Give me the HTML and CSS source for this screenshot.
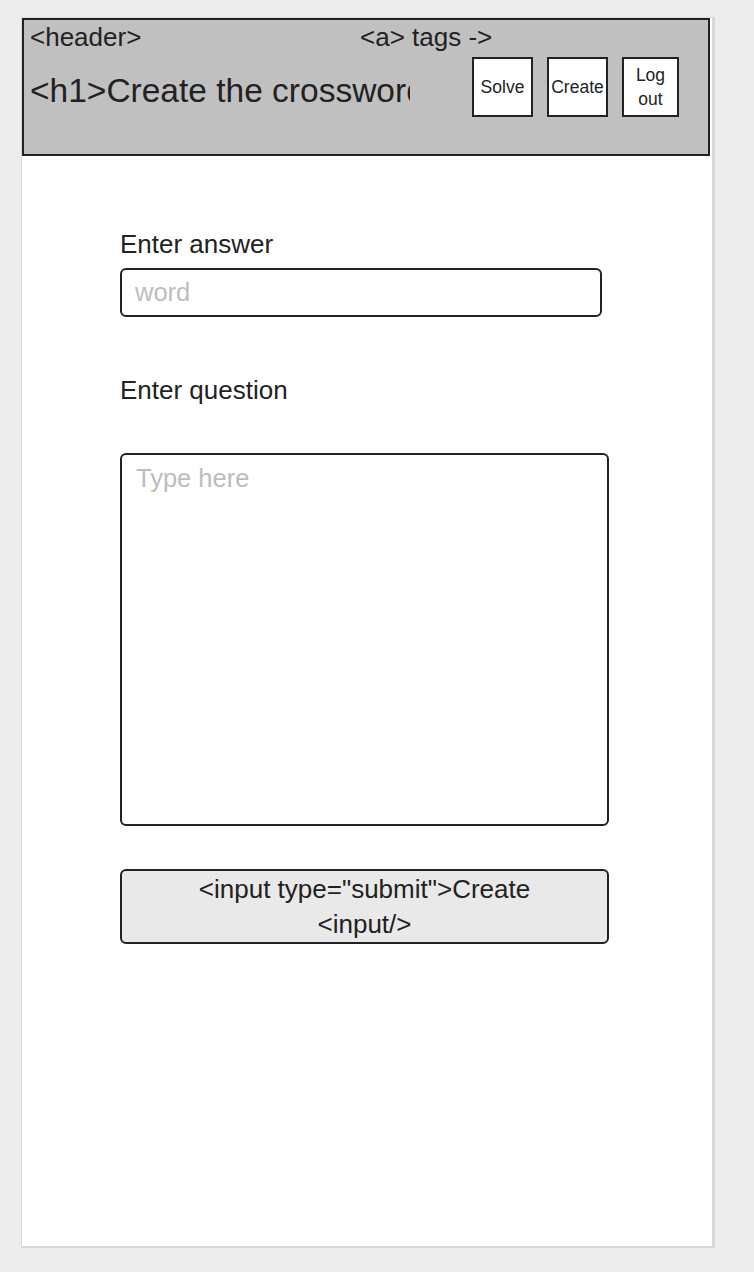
FILE: index.html
```html
<!DOCTYPE html>
<html lang="en">
<head>
  <meta charset="UTF-8">
  <meta name="viewport" content="width=device-width, initial-scale=1.0">
  <title>Create the crossword</title>
  <link rel="stylesheet" href="styles.css">
</head>
<body>
  <div class="frame">
    <header class="header">
      <div class="header-top">
        <span class="tag-label">&lt;header&gt;</span>
        <span class="tag-label">&lt;a&gt; tags -&gt;</span>
      </div>
      <div class="header-main">
        <h1>&lt;h1&gt;Create the crossword&lt;/h1&gt;</h1>
        <nav class="nav">
          <a href="#" class="nav-link">Solve</a>
          <a href="#" class="nav-link">Create</a>
          <a href="#" class="nav-link">Log out</a>
        </nav>
      </div>
    </header>

    <form class="form">
      <label class="label" for="answer">Enter answer</label>
      <input id="answer" class="field" type="text" placeholder="word">

      <label class="label label-question" for="question">Enter question</label>
      <textarea id="question" class="field area" placeholder="Type here"></textarea>

      <button type="submit" class="submit">&lt;input type="submit"&gt;Create<br>&lt;input/&gt;</button>
    </form>
  </div>
</body>
</html>
```

FILE: styles.css
```css
body {
  margin: 0;
  padding: 17px 0 0 21px;
  background-color: #ededed;
  font-family: "Liberation Sans", Arial, sans-serif;
  color: #222;
}
.frame {
  width: 694px;
  height: 1231px;
  box-sizing: border-box;
  background-color: #fff;
  border: 1px solid #d8d8d8;
  border-right-width: 3px;
  border-bottom-width: 2px;
}
.header {
  width: 688px;
  height: 138px;
  box-sizing: border-box;
  background-color: #c0c0c0;
  border: 2px solid #222;
  padding: 2px 6px 0;
}
.header-top {
  display: grid;
  grid-template-columns: 330px auto;
}
.tag-label {
  font-size: 26px;
  line-height: 30px;
}
.header-main {
  display: flex;
  align-items: center;
  margin-top: 1px;
}
h1 {
  width: 380px;
  margin: 0;
  overflow: hidden;
  white-space: nowrap;
  font-size: 33.5px;
  font-weight: normal;
  line-height: 60px;
  padding-top: 8px;
}
.nav {
  display: flex;
  gap: 14px;
  margin-left: 62px;
}
.nav-link {
  display: flex;
  align-items: center;
  justify-content: center;
  width: 61px;
  height: 60px;
  box-sizing: border-box;
  background-color: #fff;
  border: 2px solid #222;
  color: #222;
  text-decoration: none;
  text-align: center;
  font-size: 17.5px;
  line-height: 24px;
  padding: 0;
}
.nav-link:last-child {
  width: 57px;
  padding: 0 8px;
}
.form {
  display: flex;
  flex-direction: column;
  align-items: flex-start;
  padding: 74px 0 0 98px;
}
.label {
  font-size: 26px;
  line-height: 28px;
}
.field {
  box-sizing: border-box;
  width: 482px;
  height: 49px;
  margin-top: 10px;
  padding: 0 13px;
  border: 2px solid #222;
  border-radius: 6px;
  font-family: inherit;
  font-size: 25.5px;
  color: #222;
  background: #fff;
}
.field::placeholder {
  color: #bdbdbd;
}
.label-question {
  margin-top: 59px;
}
.area {
  width: 489px;
  height: 373px;
  margin-top: 49px;
  padding: 8px 14px;
  resize: none;
  line-height: 30px;
}
.submit {
  width: 489px;
  height: 75px;
  margin-top: 43px;
  border: 2px solid #222;
  border-radius: 6px;
  background-color: #e9e9e9;
  font-family: inherit;
  font-size: 26px;
  line-height: 35px;
  color: #222;
  padding: 0;
}
```
